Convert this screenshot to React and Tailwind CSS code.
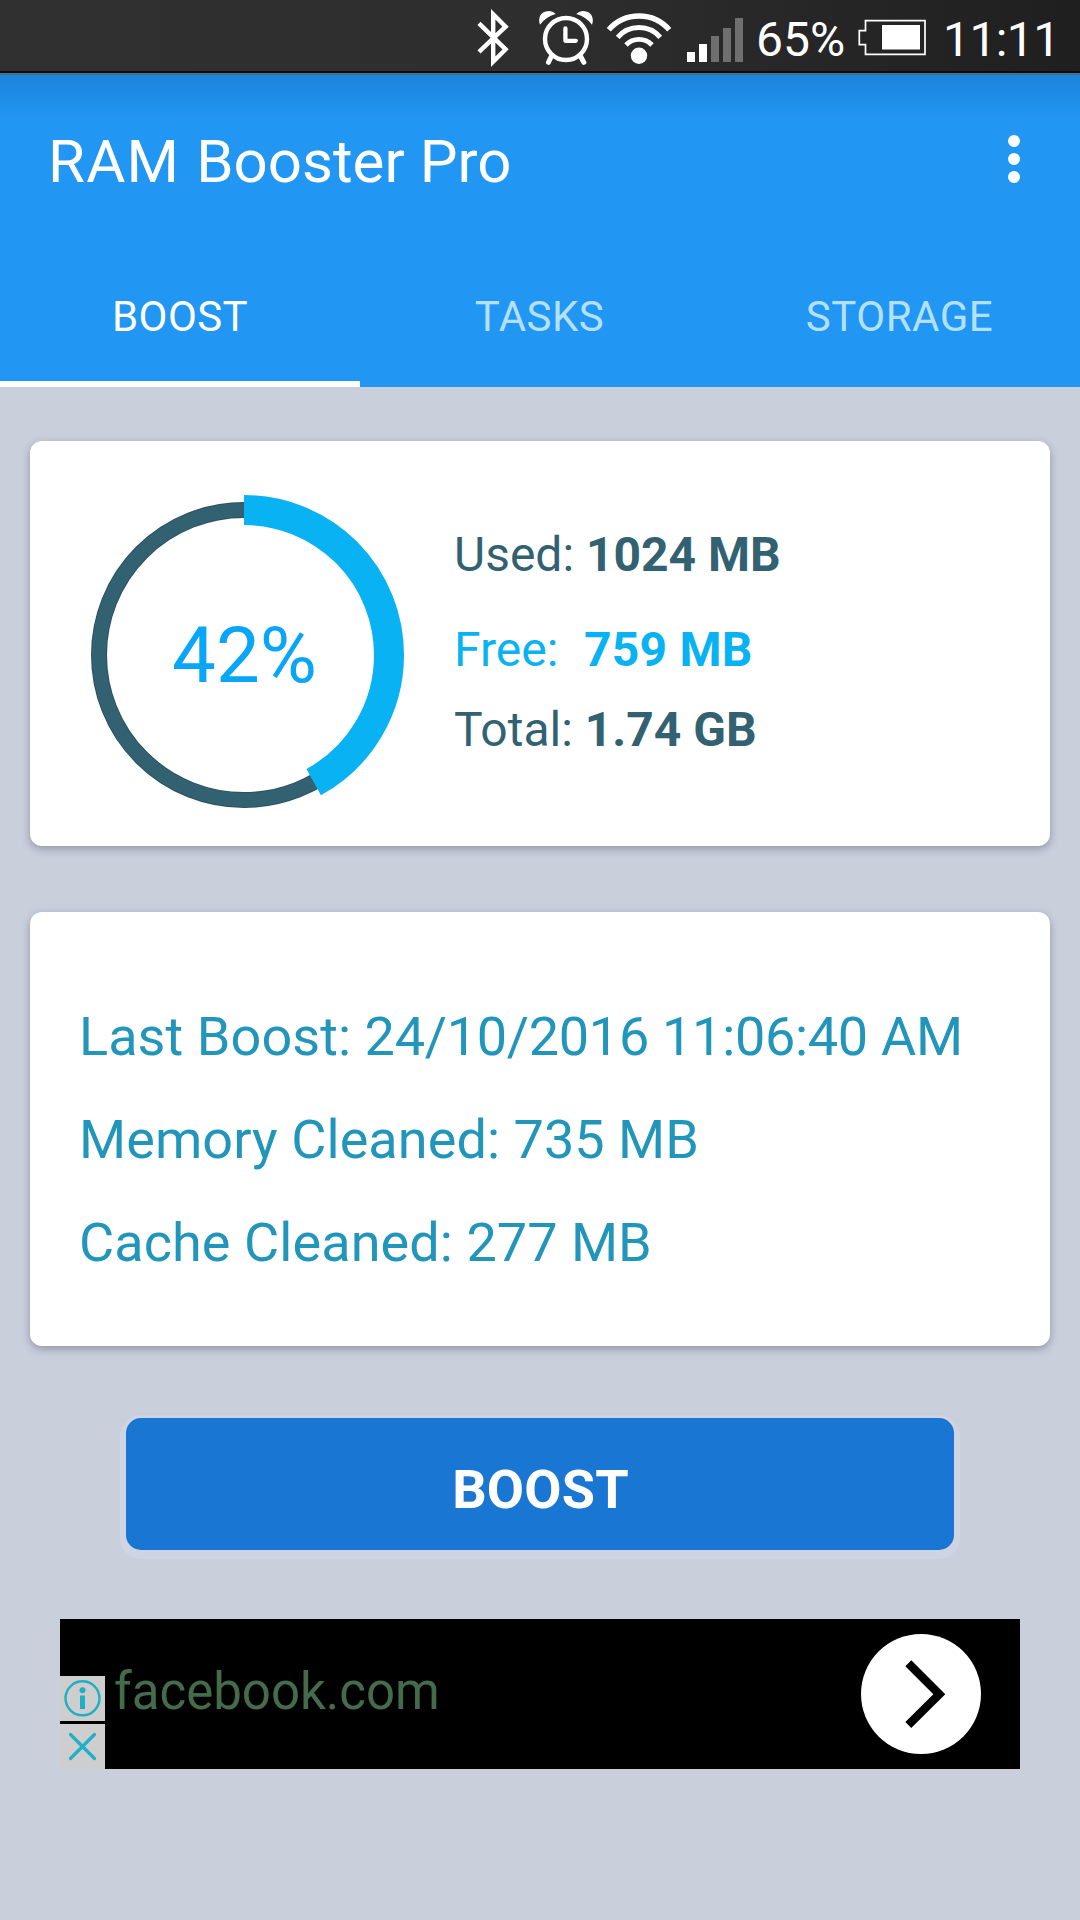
import { useState } from 'react';

const TABS = ['BOOST', 'TASKS', 'STORAGE'];

const memory = { percent: 42, used: '1024 MB', free: '759 MB', total: '1.74 GB' };

const lastBoost = [
  { label: 'Last Boost', value: '24/10/2016 11:06:40 AM', spacing: '-tracking-[0.3px]' },
  { label: 'Memory Cleaned', value: '735 MB', spacing: 'tracking-normal' },
  { label: 'Cache Cleaned', value: '277 MB', spacing: 'tracking-normal' },
];

function BluetoothIcon() {
  return (
    <svg width="34" height="71" viewBox="476 0 34 71" fill="none" stroke="#fff" strokeWidth="4.4">
      <path d="M479 23.4 L505.6 49.3 L493.2 61.7 V14.3 L505.6 26.7 L479 51.9" />
    </svg>
  );
}

function AlarmIcon() {
  return (
    <svg width="56" height="71" viewBox="538 0 56 71" fill="none" stroke="#fff">
      <circle cx="566" cy="39" r="21" strokeWidth="4.4" />
      <path d="M565.4 28.5 V40.8 H575.8" strokeWidth="4.3" strokeLinecap="round" strokeLinejoin="round" />
      <path d="M551 57 L548.5 62.3 M581 57 L583.8 62.3" strokeWidth="5" strokeLinecap="round" />
      <path d="M540 24.8 C537.5 18 540.5 11 549.5 11 Q553.5 11.3 555.7 14 Q545.5 17 540 24.8 Z" fill="#fff" stroke="none" />
      <path d="M592 24.8 C594.5 18 591.5 11 582.5 11 Q578.5 11.3 576.3 14 Q586.5 17 592 24.8 Z" fill="#fff" stroke="none" />
    </svg>
  );
}

function WifiIcon() {
  return (
    <svg width="66" height="71" viewBox="606 0 66 71" fill="none" stroke="#fff">
      <path d="M608.8 29.8 A40 40 0 0 1 669.2 29.8" strokeWidth="5.4" />
      <path d="M617.7 37.3 A28 28 0 0 1 660.3 37.3" strokeWidth="5" />
      <path d="M626 45 A18 18 0 0 1 652 45" strokeWidth="4.8" />
      <circle cx="639" cy="55.8" r="8.2" fill="#fff" stroke="none" />
    </svg>
  );
}

function SignalIcon() {
  return (
    <svg width="58" height="71" viewBox="686 0 58 71">
      <rect x="687" y="52" width="8" height="10" fill="#fff" />
      <rect x="699" y="44" width="8" height="18" fill="#fff" />
      <rect x="711" y="36" width="8" height="26" fill="#6f6f6f" />
      <rect x="723" y="28" width="8" height="34" fill="#6f6f6f" />
      <rect x="735" y="18" width="8" height="44" fill="#6f6f6f" />
    </svg>
  );
}

function BatteryIcon() {
  return (
    <svg width="68" height="71" viewBox="858 0 68 71">
      <path d="M865.5 20.7 H925 V54.3 H865.5 V44.7 H859.3 V30.6 H865.5 Z" fill="none" stroke="#fff" strokeWidth="1.7" />
      <rect x="882" y="25" width="38" height="24.5" fill="#fff" />
    </svg>
  );
}

function StatusBar() {
  return (
    <div className="flex h-[73px] items-center border-b-2 border-[#0c0c0c] bg-linear-to-r from-[#303030] via-[#2e2e2e] to-[#1f1f1f] pl-[476px] text-[48px] leading-[64px] text-white">
      <BluetoothIcon />
      <div className="ml-[28px]"><AlarmIcon /></div>
      <div className="ml-[12px]"><WifiIcon /></div>
      <div className="ml-[14px]"><SignalIcon /></div>
      <span className="ml-[12px] w-[90px] pt-[8px] whitespace-nowrap">65%</span>
      <div className="ml-[12px]"><BatteryIcon /></div>
      <span className="ml-[17px] pt-[8px] tracking-[-0.6px] whitespace-nowrap">11:11</span>
    </div>
  );
}

function AppBar({ active, onSelect }) {
  return (
    <header className="h-[314px] border-t-2 border-[#456f90] bg-[#2196f3] bg-linear-to-b from-[#1b84da] via-[#2196f3] via-[14%] to-[#2196f3] text-white">
      <div className="flex h-[175px] items-center justify-between pr-[60px] pb-[2px] pl-[48px]">
        <h1 className="text-[60px] leading-[72px] whitespace-nowrap">
          <span className="tracking-[1.2px]">RAM </span>Booster Pro
        </h1>
        <button className="flex flex-col gap-1.5 pb-[5px]" aria-label="More options">
          <span className="size-3 rounded-full bg-white" />
          <span className="size-3 rounded-full bg-white" />
          <span className="size-3 rounded-full bg-white" />
        </button>
      </div>
      <nav className="grid h-[137px] grid-cols-3">
        {TABS.map((tab) => (
          <button
            key={tab}
            onClick={() => onSelect(tab)}
            className={
              tab === active
                ? 'border-b-6 border-white pt-[2px] text-[42px] tracking-[0.4px] text-white'
                : 'border-b-6 border-transparent pt-[2px] pr-[1px] text-[42px] tracking-[0.5px] text-[#b3e0fd]'
            }
          >
            {tab}
          </button>
        ))}
      </nav>
    </header>
  );
}

function MemoryRing({ percent }) {
  const radius = 145;
  const length = 2 * Math.PI * radius;

  return (
    <div className="grid size-[320px] place-items-center">
      <svg className="col-start-1 row-start-1" width="320" height="320" viewBox="0 0 320 320" fill="none">
        <circle cx="160" cy="160" r={radius} stroke="#2b505e" strokeWidth="16" />
        <circle cx="160" cy="160" r={radius} stroke="#326272" strokeWidth="14" />
        <circle
          cx="160"
          cy="160"
          r={radius}
          stroke="#08b2f3"
          strokeWidth="30"
          strokeDasharray={`${(length * percent) / 100} ${length}`}
          transform="rotate(-90 160 160)"
        />
      </svg>
      <span className="col-start-1 row-start-1 pt-[2px] pl-[1px] text-[78px] leading-[80px] text-[#08a5f9]">{percent}%</span>
    </div>
  );
}

function MemoryCard() {
  return (
    <section className="mt-[54px] flex h-[405px] rounded-xl bg-white pt-[54px] pl-[54px] shadow-[0_3px_8px_rgba(60,65,85,0.4)]">
      <MemoryRing percent={memory.percent} />
      <div className="ml-[50px] pt-[32px] text-[48px] leading-[56px] whitespace-nowrap text-[#326272]">
        <p>Used: <b>{memory.used}</b></p>
        <p className="mt-[39px] text-[#08b2f3]">Free:&nbsp; <b className="ml-[2px] tracking-[0.2px]">{memory.free}</b></p>
        <p className="mt-[24px]">Total: <b>{memory.total}</b></p>
      </div>
    </section>
  );
}

function LastBoostCard() {
  return (
    <section className="mt-[66px] h-[434px] rounded-xl bg-white pt-[73px] pl-[49px] shadow-[0_3px_8px_rgba(60,65,85,0.4)]">
      {lastBoost.map(({ label, value, spacing }) => (
        <p key={label} className="text-[54px] leading-[103px] whitespace-nowrap text-[#2295bb]">
          <span className="tracking-[0.08px]">{label}: </span>
          <span className={spacing}>{value}</span>
        </p>
      ))}
    </section>
  );
}

function AdBanner() {
  return (
    <section className="mx-[30px] mt-[69px] flex h-[150px] items-center bg-black">
      <div className="flex flex-col gap-[3px] self-end">
        <svg width="45" height="45" viewBox="0 0 45 45" className="bg-[#cecece]">
          <circle cx="22.5" cy="22.3" r="17" fill="none" stroke="#1fafc6" strokeWidth="2.4" />
          <circle cx="22.5" cy="14.2" r="3" fill="#1fafc6" />
          <rect x="20" y="19.5" width="5" height="13.5" fill="#1fafc6" />
        </svg>
        <svg width="45" height="45" viewBox="0 0 45 45" className="bg-[#cecece]">
          <path d="M10.5 10.5 L34.5 34.5 M34.5 10.5 L10.5 34.5" stroke="#1fafc6" strokeWidth="3.2" strokeLinecap="round" />
        </svg>
      </div>
      <span className="ml-[9px] pb-[5px] text-[51px] leading-[60px] text-[#446b4b]">facebook.com</span>
      <svg className="mr-[39px] ml-auto" width="120" height="120" viewBox="0 0 120 120">
        <circle cx="60" cy="60" r="60" fill="#fff" />
        <path d="M47.3 29.3 L78.3 60.3 L47.3 91" fill="none" stroke="#000" strokeWidth="8.4" />
      </svg>
    </section>
  );
}

export default function App() {
  const [active, setActive] = useState('BOOST');

  return (
    <div className="h-[1920px] w-[1080px] overflow-hidden bg-[#cacfdc] font-[Roboto,sans-serif]">
      <StatusBar />
      <AppBar active={active} onSelect={setActive} />
      <main className="flex flex-col px-[30px]">
        <MemoryCard />
        <LastBoostCard />
        <button className="mx-[96px] mt-[72px] h-[132px] rounded-[15px] bg-[#1976d3] pt-[11px] pl-[1px] text-[54px] font-bold tracking-[0.2px] text-white shadow-[0_3px_0_6px_#ced4e1]">
          BOOST
        </button>
        <AdBanner />
      </main>
    </div>
  );
}
